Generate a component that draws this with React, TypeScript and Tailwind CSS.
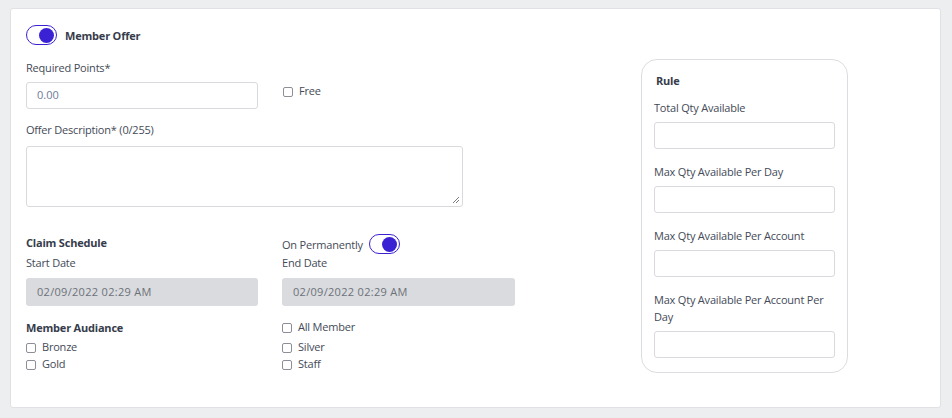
import React from "react";

function Toggle() {
  return (
    <span className="relative inline-flex h-[20px] w-[31px] shrink-0 items-center rounded-full border border-[#3a22d4] bg-white">
      <span className="absolute right-[2px] h-[15px] w-[15px] rounded-full bg-[#3a22d4]" />
    </span>
  );
}

function Check({ label }: { label: string }) {
  return (
    <label className="flex h-[17px] items-center gap-[6px] text-[11px] tracking-[-0.2px] text-[#444a57]">
      <span className="h-[10px] w-[10px] shrink-0 rounded-[2px] border border-[#8c8f96] bg-white" />
      {label}
    </label>
  );
}

function Label({ children, bold }: { children: React.ReactNode; bold?: boolean }) {
  return (
    <div className={"h-[15px] text-[11px] leading-[15px] tracking-[-0.2px] " + (bold ? "font-bold text-[#363c4b]" : "text-[#444a57]")}>
      {children}
    </div>
  );
}

function TextBox({ value, className }: { value?: string; className?: string }) {
  return (
    <div className={"flex h-[27px] items-center rounded-[3px] border border-[#d8dadd] bg-white px-[10px] text-[11px] text-[#6f7c99] " + (className ?? "")}>
      {value}
    </div>
  );
}

function DateBox() {
  return (
    <div className="flex h-[28px] items-center rounded-[3px] bg-[#d9dbde] px-[11px] text-[11px] tracking-[0.3px] text-[#6d717a]">
      02/09/2022 02:29 AM
    </div>
  );
}

export default function App() {
  return (
    <div className="h-[418px] w-[952px] bg-[#eceef0] pl-[10px] pt-[8px] font-['Open_Sans',sans-serif]">
      <div className="flex h-[400px] w-[931px] rounded-[3px] border border-[#dfe1e4] bg-white pl-[15px] pt-[16px]">
        <div className="w-[489px]">
          <div className="flex h-[20px] items-center gap-[8px]">
            <Toggle />
            <span className="pt-[2px] text-[11px] font-bold tracking-[-0.2px] text-[#363c4b]">Member Offer</span>
          </div>

          <div className="mt-[15px]">
            <Label>Required Points*</Label>
          </div>
          <div className="mt-[7px] flex">
            <TextBox value="0.00" className="w-[232px]" />
            <div className="ml-[25px] mt-[1px]">
              <Check label="Free" />
            </div>
          </div>

          <div className="mt-[13px]">
            <Label>Offer Description* (0/255)</Label>
          </div>
          <div className="relative mt-[9px] h-[61px] w-[437px] rounded-[3px] border border-[#d8dadd] bg-white">
            <svg className="absolute bottom-[2px] right-[2px]" width="8" height="8" viewBox="0 0 8 8">
              <path d="M7 1 L1 7 M7 4 L4 7" stroke="#7a7d83" strokeWidth="1" />
            </svg>
          </div>

          <div className="mt-[27px] grid grid-cols-[232px_233px] gap-x-[24px]">
            <div>
              <div className="flex h-[20px] items-start pt-[1px]">
                <Label bold>Claim Schedule</Label>
              </div>
              <div className="mt-[1px]">
                <Label>Start Date</Label>
              </div>
              <div className="mt-[8px]">
                <DateBox />
              </div>
              <div className="mt-[14px]">
                <Label bold>Member Audiance</Label>
              </div>
              <div className="mt-[4px]">
                <Check label="Bronze" />
                <Check label="Gold" />
              </div>
            </div>
            <div>
              <div className="flex h-[20px] items-center gap-[6px]">
                <span className="pt-[2px] text-[11px] tracking-[-0.2px] text-[#444a57]">On Permanently</span>
                <Toggle />
              </div>
              <div className="mt-[1px]">
                <Label>End Date</Label>
              </div>
              <div className="mt-[8px]">
                <DateBox />
              </div>
              <div className="mt-[13px]">
                <Check label="All Member" />
              </div>
              <div className="mt-[3px]">
                <Check label="Silver" />
                <Check label="Staff" />
              </div>
            </div>
          </div>
        </div>

        <div className="ml-[126px] mt-[34px] h-[314px] w-[207px] rounded-[16px] border border-[#dcdde0] px-[12px] pt-[13px]">
          <div className="pl-[2px]">
            <Label bold>Rule</Label>
          </div>
          <div className="mt-[12px]">
            <Label>Total Qty Available</Label>
          </div>
          <TextBox className="mt-[7px] w-[181px]" />
          <div className="mt-[15px]">
            <Label>Max Qty Available Per Day</Label>
          </div>
          <TextBox className="mt-[7px] w-[181px]" />
          <div className="mt-[15px]">
            <Label>Max Qty Available Per Account</Label>
          </div>
          <TextBox className="mt-[7px] w-[181px]" />
          <div className="mt-[14px] text-[11px] leading-[17px] tracking-[-0.2px] text-[#444a57]">
            Max Qty Available Per Account Per Day
          </div>
          <TextBox className="mt-[6px] w-[181px]" />
        </div>
      </div>
    </div>
  );
}
